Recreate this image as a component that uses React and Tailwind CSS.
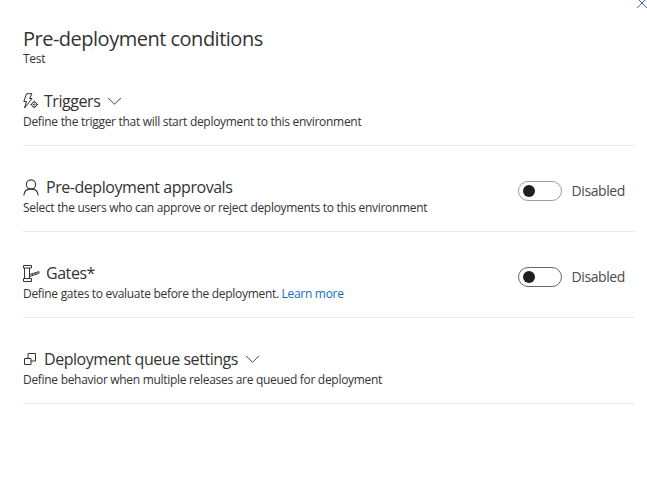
import React from 'react';

const TriggerIcon = () => (
  <svg width="16" height="16" viewBox="0 0 16 16" fill="none" stroke="#333" strokeWidth="1">
    <path d="M3.5 0.7H9L6.5 5.5H9L1.5 15l2-6.5H0.8z" />
    <circle cx="11.2" cy="11.5" r="2.5" />
    <circle cx="11.2" cy="11.5" r="0.7" />
    <path d="M11.2 7.6V9M11.2 14v1.4M7.3 11.5h1.4M13.7 11.5h1.4" />
  </svg>
);

const UserIcon = () => (
  <svg width="16" height="17" viewBox="0 0 16 17" fill="none" stroke="#333" strokeWidth="1.1">
    <circle cx="8" cy="5.5" r="4.6" />
    <path d="M0.8 16.5c0.3-4 3-6.6 7.2-6.6s6.9 2.6 7.2 6.6" />
  </svg>
);

const GateIcon = () => (
  <svg width="17" height="17" viewBox="0 0 17 17" fill="none" stroke="#333" strokeWidth="1">
    <path d="M0.5 0.5h8v2.5h-8zM1.5 3v10.5M6.5 3v10.5M0.5 13.5h8v3h-8z" />
    <path d="M6.5 11.5l9.5-3.2V6.6L6.5 9.6z" />
    <path d="M9 8.8l1 2M12 7.8l1 2" />
  </svg>
);

const QueueIcon = () => (
  <svg width="12" height="12" viewBox="0 0 12 12" fill="none" stroke="#333" strokeWidth="1">
    <path d="M0.5 5.5h6.5v6H0.5zM4 5.5V0.5h7.5v7.5H7" />
  </svg>
);

const Chevron = () => (
  <svg width="15" height="8" viewBox="0 0 15 8" fill="none" stroke="#444" strokeWidth="1">
    <path d="M1 0.8l6.5 6.5L14 0.8" />
  </svg>
);

const Toggle = ({ dark }) => (
  <div className="flex items-center">
    <div className={`w-[44px] h-[20px] rounded-full border bg-white flex items-center pl-[4px] ${dark ? 'border-[#666666]' : 'border-[#a19f9d]'}`}>
      <div className="w-[12px] h-[12px] rounded-full bg-[#201f1e]" />
    </div>
    <span className="ml-[10px] mr-[10px] text-[14px] leading-[20px] tracking-[-0.4px] text-[#4a4a4a]">Disabled</span>
  </div>
);

const Section = ({ icon, iconBox, title, chevron, toggle, children }) => (
  <div className="flex items-start justify-between pb-[15px] border-b border-[#eaeaea]">
    <div>
      <div className="flex items-center h-[24px]">
        <span className={`flex items-center ${iconBox}`}>{icon}</span>
        <span className="text-[16px] leading-[24px] tracking-[-0.45px] text-[#333333]">{title}</span>
        {chevron && <span className="ml-[7px] flex items-center"><Chevron /></span>}
      </div>
      <div className="text-[12px] leading-[16px] mt-[1px] tracking-[-0.3px] text-[#333333]">{children}</div>
    </div>
    {toggle && <div className="mt-[6px]"><Toggle dark={toggle === 'dark'} /></div>}
  </div>
);

export default function App() {
  return (
    <div className="relative w-[647px] h-[501px] bg-white overflow-hidden font-['Open_Sans','Noto_Sans',sans-serif]">
      <svg className="absolute right-[-1px] top-[-3px]" width="12" height="12" viewBox="0 0 12 12" fill="none" stroke="#2f6db5" strokeWidth="1">
        <path d="M1 1l10 10M11 1L1 11" />
      </svg>
      <div className="pl-[23px] pr-[12px] pt-[25px]">
        <h1 className="text-[20px] leading-[27px] tracking-[-0.5px] text-[#333333]">Pre-deployment conditions</h1>
        <p className="text-[12px] leading-[14px] tracking-[-0.28px] text-[#333333]">Test</p>
        <div className="mt-[23px] flex flex-col gap-[29px]">
          <Section icon={<TriggerIcon />} iconBox="w-[21px]" title="Triggers" chevron>
            Define the trigger that will start deployment to this environment
          </Section>
          <Section icon={<UserIcon />} iconBox="w-[23px]" title="Pre-deployment approvals" toggle="light">
            Select the users who can approve or reject deployments to this environment
          </Section>
          <Section icon={<GateIcon />} iconBox="w-[23px]" title="Gates*" toggle="dark">
            Define gates to evaluate before the deployment. <a className="text-[#106ebe]">Learn more</a>
          </Section>
          <Section icon={<QueueIcon />} iconBox="w-[21px] pl-[1px]" title="Deployment queue settings" chevron>
            Define behavior when multiple releases are queued for deployment
          </Section>
        </div>
      </div>
    </div>
  );
}
